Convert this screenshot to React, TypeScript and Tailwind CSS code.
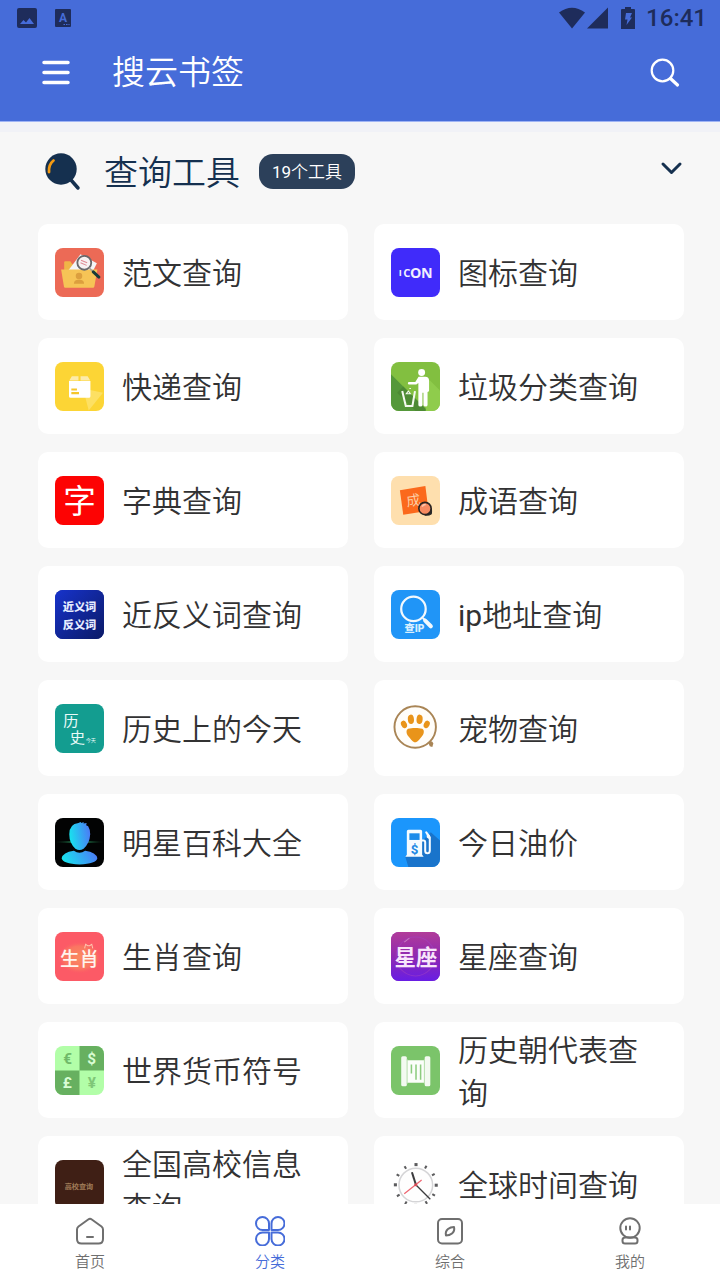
import React from "react";

const Tile = ({ bg, children }: { bg: string; children?: React.ReactNode }) => (
  <svg viewBox="0 0 48 48" className="size-[49px] shrink-0 rounded-lg" aria-hidden="true">
    <rect width="48" height="48" fill={bg} />
    {children}
  </svg>
);

const FolderIcon = () => (
  <Tile bg="#ec6a56">
    <path d="M9 22v-8q0-1 1-1h5l2 3h6v6z" fill="#f0b547" />
    <path d="M13 22 25 6l16 9-4 8z" fill="#f4f5f7" />
    <path d="M6 21h35.500l-3 17q-.2 1-1.200 1H10q-1 0-1.200-1z" fill="#f6c456" />
    <circle cx="23.500" cy="27.500" r="3.200" fill="#dc9f3e" />
    <path d="M18.500 35q0-3.500 3.500-4h3q3.500.5 3.500 4z" fill="#dc9f3e" />
    <circle cx="28.700" cy="14.500" r="6.800" fill="#f7f2f2" stroke="#69696b" strokeWidth="1.800" />
    <path d="m25.500 12 6 2.500M25 14.500l6 2.500" stroke="#df8a92" strokeWidth="1" />
    <path d="m33.500 19.500 3.500 3.500" stroke="#a3a09b" strokeWidth="1.500" />
    <path d="m37.500 23.500 5.500 5" stroke="#173b39" strokeWidth="3" strokeLinecap="round" />
  </Tile>
);

const PackageIcon = () => (
  <Tile bg="#fcd535">
    <path d="m27.500 26 19.500 4-14 17.500z" fill="#fde063" />
    <path d="m14 18 2.500-4h6.500v4zM25 14h7l2.500 4H25z" fill="#fdebaa" />
    <path d="M13.700 18.500h21v15q0 1.500-1.500 1.500h-18q-1.500 0-1.500-1.500z" fill="#fff" />
    <path d="M16 27h5.500M16 30.500h7.500" stroke="#f5c62c" strokeWidth="2" />
  </Tile>
);

const IconIcon = () => (
  <Tile bg="#402bfa">
    <g fill="#f1efff" fontWeight="700" className="font-['Open_Sans',sans-serif]">
      <text x="7.500" y="27.500" fontSize="9">I</text>
      <text x="12" y="28.500" fontSize="11">C</text>
      <text x="18.500" y="29.500" fontSize="14">O</text>
      <text x="29.500" y="29.500" fontSize="14">N</text>
    </g>
  </Tile>
);

const TrashIcon = () => (
  <Tile bg="#82bf40">
    <path d="M0 12 36 48H0z" fill="#55983a" />
    <path d="M12 24 36 48H24L6 30z" fill="#4d8a34" />
    <path d="M36 16 48 28v20H34z" fill="#8fcc4c" />
    <circle cx="30" cy="10.300" r="3.400" fill="#fff" />
    <path
      d="M27 14.500h6.500q3.800 0 3.800 4v9.500q0 1.300-1.500 1.300V42q0 1.500-2 1.500t-2-1.500V30h-1v12q0 1.500-2 1.500t-2-1.500V20.500l-2 1.500h-7q-1.300 0-1.300-1.200t1.300-1.200h6z"
      fill="#fff"
    />
    <path d="m11 28.500 3.500 14.500H21l2.500-14.500" fill="none" stroke="#f4f9ef" strokeWidth="2" />
    <path d="m15 31 2-2.500 2 2.500zM18 26h1.500" stroke="#f4f9ef" strokeWidth="1" fill="none" />
  </Tile>
);

const DictIcon = () => (
  <Tile bg="#fd0303">
    <text x="24" y="36" fontSize="32" fontWeight="400" fill="#fff" textAnchor="middle">字</text>
  </Tile>
);

const SynonymIcon = () => (
  <Tile bg="#0f2296">
    <defs>
      <linearGradient id="navy" x1="0" y1="0" x2="1" y2="1">
        <stop stopColor="#1733cc" />
        <stop offset="1" stopColor="#0b1a66" />
      </linearGradient>
    </defs>
    <rect width="48" height="48" fill="url(#navy)" />
    <g fill="#e6edff" fontSize="11" fontWeight="900" textAnchor="middle">
      <text x="24" y="21">近义词</text>
      <text x="24" y="38">反义词</text>
    </g>
  </Tile>
);

const IdiomIcon = () => (
  <Tile bg="#fedfae">
    <path d="m8.700 14 25-4.300 3 24.300L12 38z" fill="#fb691c" />
    <text x="22" y="29" fontSize="14" fill="#fbd0a8" textAnchor="middle" transform="rotate(-8 22 24)">成</text>
    <path d="M34 38.500q4 0 5.500-1.500.5-3 0-5z" fill="#272727" stroke="#272727" strokeWidth="1" />
    <circle cx="33.300" cy="31.800" r="6" fill="#f78a60" stroke="#2b2523" strokeWidth="1.600" />
    <path d="M30.500 30q1-2 3.500-2" stroke="#fdc7ae" strokeWidth="1.500" fill="none" />
  </Tile>
);

const IpIcon = () => (
  <Tile bg="#2095f7">
    <circle cx="22" cy="18.500" r="12" fill="none" stroke="#f2f8fd" strokeWidth="2.200" />
    <path d="m31 27.500 2.500 2" stroke="#f2f8fd" strokeWidth="2" />
    <path d="m33.500 30 5.500 5.500" stroke="#f2f8fd" strokeWidth="4" strokeLinecap="round" />
    <text x="23" y="41.500" fontSize="10" fontWeight="900" fill="#d9efff" textAnchor="middle">查IP</text>
  </Tile>
);

const HistoryIcon = () => (
  <Tile bg="#139d90">
    <g fill="#e9faf8" fontWeight="400">
      <text x="8" y="22" fontSize="15">历</text>
      <text x="14.500" y="38" fontSize="15">史</text>
      <text x="30" y="37" fontSize="5">今天</text>
    </g>
  </Tile>
);

const StarIcon = () => (
  <Tile bg="#020303">
    <defs>
      <linearGradient id="neon" x1="0" y1="0.600" x2="1" y2="0.400">
        <stop stopColor="#17e5ee" />
        <stop offset="1" stopColor="#4b7cf6" />
      </linearGradient>
      <linearGradient id="flare">
        <stop stopColor="#0b2a17" stopOpacity="0" />
        <stop offset="0.500" stopColor="#2fae6e" />
        <stop offset="1" stopColor="#0b2a17" stopOpacity="0" />
      </linearGradient>
    </defs>
    <rect y="22.500" width="48" height="2" fill="url(#flare)" />
    <path
      d="M14 16Q14 6 23 5l2-1 1 1 2-1v1.500l3-.5-.5 2 2 1Q34.500 11 34.500 16 34 25 28 30q-4 2.500-8 0-6-5-6-14z"
      fill="url(#neon)"
    />
    <path d="M6.500 39.500q1-6 12-7.500 5.500 4 11 0 11 1.500 12 7.500-1 5.500-17.500 6-16.500-.5-17.500-6z" fill="url(#neon)" />
  </Tile>
);

const PawIcon = () => (
  <Tile bg="#ffffff">
    <circle cx="23.700" cy="22.500" r="20.300" fill="#fffdf9" stroke="#a98556" strokeWidth="1.900" />
    <path d="m36.500 38 3.500-1.500 1.500 2-1 3.500-2.500-.5z" fill="#a98556" />
    <g fill="#e9941a">
      <ellipse cx="12.700" cy="20" rx="2.800" ry="3.800" transform="rotate(-25 12.700 20)" />
      <ellipse cx="19.500" cy="15" rx="3" ry="4.600" transform="rotate(-6 19.500 15)" />
      <ellipse cx="28" cy="15" rx="3" ry="4.600" transform="rotate(6 28 15)" />
      <ellipse cx="35" cy="20" rx="2.800" ry="3.800" transform="rotate(25 35 20)" />
      <path d="M23.700 23.500c3 0 4.500.2 7 .7 2.500 1.300 1.500 5.800-.7 7.800-2.300 2.500-4 5.500-6.300 5.500s-4-3-6.300-5.500c-2.200-2-3.200-6.500-.7-7.800 2.500-.5 4-.7 7-.7z" />
    </g>
  </Tile>
);

const FuelIcon = () => (
  <Tile bg="#1b96fc">
    <path d="M14 38 31 22l8-8 9 8v26H17z" fill="#1974cb" />
    <path d="M15.500 36V13q0-1.500 1.500-1.500h12q1.500 0 1.500 1.500v23l1.500 2H14z" fill="#f5fbff" />
    <rect x="18" y="15" width="10" height="6.500" fill="#1b8bea" />
    <text x="23" y="35" fontSize="13" fontWeight="700" fill="#2089e4" textAnchor="middle">$</text>
    <path
      d="M30.500 22h1.500q1.500 0 1.500 2v8q0 2.500 2.200 2.500T38 32V19l-3.500-5"
      fill="none"
      stroke="#f5fbff"
      strokeWidth="2"
      strokeLinecap="round"
    />
    <path d="M35 14v5l3 2v-4z" fill="#f5fbff" />
  </Tile>
);

const ZodiacIcon = () => (
  <Tile bg="#fc5a66">
    <defs>
      <radialGradient id="glow">
        <stop stopColor="#fa8a60" />
        <stop offset="0.700" stopColor="#fa7562" />
        <stop offset="1" stopColor="#fc5a66" stopOpacity="0" />
      </radialGradient>
    </defs>
    <rect x="2" y="9" width="44" height="32" fill="url(#glow)" />
    <path d="m29 16 1-4 2 1.500h2L36 12l1 4" fill="none" stroke="#fdc7ae" strokeWidth="1" />
    <text x="24" y="33" fontSize="19" fontWeight="500" fill="#fff4ee" textAnchor="middle">生肖</text>
  </Tile>
);

const ConstellationIcon = () => (
  <Tile bg="#8b2cb8">
    <defs>
      <linearGradient id="violet" x1="0" y1="0" x2="0" y2="1">
        <stop stopColor="#b13c99" />
        <stop offset="0.500" stopColor="#8f29b1" />
        <stop offset="1" stopColor="#681de4" />
      </linearGradient>
    </defs>
    <rect width="48" height="48" fill="url(#violet)" />
    <circle cx="24" cy="24" r="19" fill="none" stroke="#a344c4" strokeWidth="1" opacity="0.500" />
    <path d="m13 10 5-4" stroke="#c77cc3" strokeWidth="1" />
    <text x="24.500" y="32" fontSize="21" fontWeight="700" fill="#f8e6fb" textAnchor="middle">星座</text>
  </Tile>
);

const CurrencyIcon = () => (
  <Tile bg="#b2fea8">
    <path d="M24 0h24v24H24zM0 24h24v24H0z" fill="#67b060" />
    <g fontSize="15" fontWeight="700" textAnchor="middle" className="font-['Roboto',sans-serif]">
      <text x="12.500" y="17.500" fill="#70b969">€</text>
      <text x="36" y="17.500" fill="#d9fdd4">$</text>
      <text x="12" y="41.500" fill="#d9fdd4">£</text>
      <text x="36" y="41.500" fill="#7fc777">¥</text>
    </g>
  </Tile>
);

const ScrollIcon = () => (
  <Tile bg="#7bc46a">
    <path d="M15 14h18v22H15z" fill="#fbfefa" />
    <rect x="10" y="10" width="5.500" height="29.500" rx="1.500" fill="#f3faf1" />
    <rect x="33" y="10" width="5.500" height="29.500" rx="1.500" fill="#f3faf1" />
    <path d="M15.800 13v24M32.700 13v24" stroke="#b9dfb0" strokeWidth="1" />
    <path d="M20 18v9M24.500 18v15M29 18v15" stroke="#8ccc7e" strokeWidth="1.500" />
  </Tile>
);

const CollegeIcon = () => (
  <Tile bg="#3f1f15">
    <text x="23.500" y="28" fontSize="7" fontWeight="700" fill="#a07c58" textAnchor="middle">高校查询</text>
  </Tile>
);

const hours = Array.from({ length: 12 }, (_, i) => i * 30);

const ClockIcon = () => (
  <Tile bg="#ffffff">
    <circle cx="24.300" cy="24.500" r="16.500" fill="#fefefe" stroke="#d5d5d7" strokeWidth="1.500" />
    {hours.map((deg) => (
      <rect
        key={deg}
        x="23"
        y="3"
        width={deg % 90 === 0 ? 3 : 2}
        height="3"
        fill="#5c5c5e"
        transform={`rotate(${deg} 24.300 24.500)`}
      />
    ))}
    <path d="m20.500 12 4 12.500" stroke="#3b3b3d" strokeWidth="2" />
    <path d="m24 24 14.500 14.500" stroke="#3b3b3d" strokeWidth="1.300" />
    <path d="M30 19.500 13 33" stroke="#ee6470" strokeWidth="1.200" />
    <circle cx="24.300" cy="24.300" r="1.500" fill="#d64a55" />
  </Tile>
);

const tools = [
  { name: "范文查询", icon: FolderIcon },
  { name: "图标查询", icon: IconIcon },
  { name: "快递查询", icon: PackageIcon },
  { name: "垃圾分类查询", icon: TrashIcon },
  { name: "字典查询", icon: DictIcon },
  { name: "成语查询", icon: IdiomIcon },
  { name: "近反义词查询", icon: SynonymIcon },
  { latin: "ip", name: "地址查询", icon: IpIcon },
  { name: "历史上的今天", icon: HistoryIcon },
  { name: "宠物查询", icon: PawIcon },
  { name: "明星百科大全", icon: StarIcon },
  { name: "今日油价", icon: FuelIcon },
  { name: "生肖查询", icon: ZodiacIcon },
  { name: "星座查询", icon: ConstellationIcon },
  { name: "世界货币符号", icon: CurrencyIcon },
  { name: "历史朝代表查询", icon: ScrollIcon },
  { name: "全国高校信息查询", icon: CollegeIcon },
  { name: "全球时间查询", icon: ClockIcon },
];

const tabs = [
  {
    name: "首页",
    icon: (
      <path d="M13.200 3.500q1.800-1.300 3.600 0l9.700 7q1.500 1.200 1.500 3V23q0 4.500-4.500 4.500h-17Q2 27.500 2 23v-9.500q0-1.800 1.500-3zM12 21h6" />
    ),
  },
  {
    name: "分类",
    active: true,
    icon: (
      <path d="M14 14H7.500A6.500 6.500 0 1 1 14 7.500zM16.500 14H23A6.500 6.500 0 1 0 16.500 7.500zM14 16.500H7.500A6.500 6.500 0 1 0 14 23zM16.500 16.500H23A6.500 6.500 0 1 1 16.500 23z" />
    ),
  },
  {
    name: "综合",
    icon: (
      <>
        <rect x="3" y="3" width="24" height="24.500" rx="4" />
        <path d="M11 19.500q-1-4 2-6.500 2.500-2 6-2 1 4-2 6.500-2.500 2-6 2z" />
      </>
    ),
  },
  {
    name: "我的",
    icon: (
      <>
        <circle cx="15" cy="12" r="9.700" />
        <path d="M11 10.500v3M15 10.500v3" />
        <rect x="7.500" y="21.500" width="15" height="6" rx="2.500" />
      </>
    ),
  },
];

const StatusBar = () => (
  <div className="flex h-9 items-center justify-between pr-[13px] pl-4 text-[#1e2c5b]">
    <div className="flex items-center gap-4">
      <svg viewBox="0 0 22 22" className="size-[22px]" aria-hidden="true">
        <path
          fillRule="evenodd"
          fill="currentColor"
          d="M3 1h16q2 0 2 2v16q0 2-2 2H3q-2 0-2-2V3q0-2 2-2zm1 16h14l-4.500-6-3.500 4.500L7.500 13z"
        />
      </svg>
      <svg viewBox="0 0 18 20" className="h-5 w-[18px]" aria-hidden="true">
        <rect x="1" y="1" width="16" height="18" rx="1" fill="currentColor" />
        <text x="9" y="14" fontSize="12" fontWeight="700" fill="#466cd9" textAnchor="middle">A</text>
        <path d="M9.500 16.500h6" stroke="#466cd9" strokeWidth="1.200" strokeDasharray="1.500 1" />
      </svg>
    </div>
    <div className="flex items-center">
      <svg viewBox="0 0 28 22" className="h-[22px] w-7" aria-hidden="true">
        <path d="M1 5.500Q14-4 27 5.500L14 21.500z" fill="currentColor" />
      </svg>
      <svg viewBox="0 0 24 22" className="h-[22px] w-6" aria-hidden="true">
        <path d="M22 .5v21H1z" fill="currentColor" />
      </svg>
      <svg viewBox="0 0 16 24" className="ml-2.5 h-6 w-4" aria-hidden="true">
        <path d="M5 1h6v2h3q1 0 1 1v19H1V4q0-1 1-1h3z" fill="currentColor" />
        <path d="M6 7h6l-2 4.500h2L6.500 19l1-5.500H5z" fill="#466cd9" />
      </svg>
      <span className="ml-2.5 text-2xl font-medium">16:41</span>
    </div>
  </div>
);

export default function App() {
  return (
    <div className="flex h-screen flex-col bg-[#f7f7f7] font-['Roboto','Noto_Sans_CJK_SC',sans-serif] font-[350] text-[#323233]">
      <header className="border-b border-[#9fb4f5] bg-[#466cd9] pb-[13px]">
        <StatusBar />
        <div className="flex h-[72px] items-center pr-10 pl-10 text-white">
          <button type="button" aria-label="菜单">
            <svg viewBox="0 0 32 32" className="size-8" aria-hidden="true">
              <path d="M4 6.500h24M4 16.500h24M4 26.500h24" stroke="#fff" strokeWidth="3.500" strokeLinecap="round" />
            </svg>
          </button>
          <h1 className="ml-10 flex-1 pt-0.5 text-[33px] leading-10">搜云书签</h1>
          <button type="button" aria-label="搜索">
            <svg viewBox="0 0 32 32" className="size-8" fill="none" stroke="#fff" aria-hidden="true">
              <circle cx="14.500" cy="14.500" r="10.800" strokeWidth="2.200" />
              <path d="m22.500 22.500 7 6.500" strokeWidth="3.200" strokeLinecap="round" />
            </svg>
          </button>
        </div>
      </header>

      <main className="min-h-0 flex-1 overflow-y-auto border-t-10 border-[#f1f2f7] pr-9 pl-[38px] [scrollbar-width:none]">
        <div className="mb-3 flex h-20 items-center text-[#15304f]">
          <svg viewBox="0 0 48 48" className="size-12" aria-hidden="true">
            <circle cx="23" cy="21" r="15.700" fill="#15304f" />
            <path d="m33 32 7 8" stroke="#15304f" strokeWidth="3.500" strokeLinecap="round" />
            <path d="M11 24q-.5-7.500 4.500-11.500" fill="none" stroke="#f39a13" strokeWidth="2.800" strokeLinecap="round" />
          </svg>
          <h2 className="ml-[18px] pt-0.5 text-[34px] leading-10">查询工具</h2>
          <span className="mb-0.5 ml-[19px] flex h-[35px] items-center rounded-[14px] bg-[#2c405a] px-[13px] pt-1 text-[17px] text-white">
            <span className="font-normal">19</span>个工具
          </span>
          <button type="button" aria-label="收起" className="mb-2 ml-auto">
            <svg viewBox="0 0 26 20" className="h-5 w-[26px]" aria-hidden="true">
              <path
                d="m5 6 8.500 8.500L22 6"
                fill="none"
                stroke="#15304f"
                strokeWidth="3"
                strokeLinecap="round"
                strokeLinejoin="round"
              />
            </svg>
          </button>
        </div>

        <div className="grid grid-cols-2 gap-x-[26px] gap-y-[18px] pb-6">
          {tools.map(({ name, latin, icon: Icon }) => (
            <a key={name} href="#" className="flex min-h-24 items-center gap-[18px] rounded-[10px] bg-white pr-7 pl-[17px]">
              <Icon />
              <span className="pt-[3px] text-[30px] leading-[43px]">
                {latin && <span className="font-normal">{latin}</span>}
                {name}
              </span>
            </a>
          ))}
        </div>
      </main>

      <nav className="grid h-[76px] grid-cols-4 bg-white">
        {tabs.map((tab) => (
          <a
            key={tab.name}
            href="#"
            className={`flex flex-col items-center pt-3 ${tab.active ? "text-[#466cd9]" : "text-[#6f6f6f]"}`}
          >
            <svg
              viewBox="0 0 30 30"
              className="size-[30px]"
              fill="none"
              stroke="currentColor"
              strokeWidth="2"
              strokeLinecap="round"
              strokeLinejoin="round"
              aria-hidden="true"
            >
              {tab.icon}
            </svg>
            <span className="mt-1 text-[15px] leading-6">{tab.name}</span>
          </a>
        ))}
      </nav>
    </div>
  );
}
